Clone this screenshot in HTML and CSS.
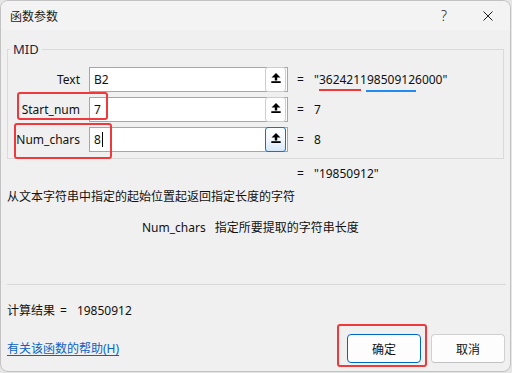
FILE: index.html
```html
<!DOCTYPE html>
<html lang="zh-CN">
<head>
<meta charset="utf-8">
<title>函数参数</title>
<link rel="stylesheet" href="styles.css">
</head>
<body>
<div class="window">
  <div class="titlebar">
    <span class="title">函数参数</span>
    <span class="tb-btn help-btn">?</span>
    <span class="tb-btn close-btn">
      <svg width="10" height="10" viewBox="0 0 10 10"><path d="M0.5 0.5 L9.5 9.5 M9.5 0.5 L0.5 9.5" stroke="#1f1f1f" stroke-width="1" fill="none"/></svg>
    </span>
  </div>
  <div class="content">
    <fieldset class="group">
      <legend class="group-title">MID</legend>
      <div class="args">
        <span class="arg-label">Text</span>
        <div class="ref-input">
          <span class="ref-text">B2</span>
          <span class="ref-btn"><svg width="10" height="10" viewBox="0 0 10 10"><path d="M5 0 L9.5 4.6 L6.2 4.6 L6.2 7.4 L3.8 7.4 L3.8 4.6 L0.5 4.6 Z" fill="#000"/><rect x="0.3" y="8.2" width="9.4" height="1.8" fill="#000"/></svg></span>
        </div>
        <span class="eq">=</span>
        <span class="val">"<span class="mark mark-red">362421</span><span class="mark mark-blue">19850912</span>6000"</span>

        <span class="arg-label">Start_num</span>
        <div class="ref-input">
          <span class="ref-text">7</span>
          <span class="ref-btn"><svg width="10" height="10" viewBox="0 0 10 10"><path d="M5 0 L9.5 4.6 L6.2 4.6 L6.2 7.4 L3.8 7.4 L3.8 4.6 L0.5 4.6 Z" fill="#000"/><rect x="0.3" y="8.2" width="9.4" height="1.8" fill="#000"/></svg></span>
        </div>
        <span class="eq">=</span>
        <span class="val">7</span>

        <span class="arg-label">Num_chars</span>
        <div class="ref-input">
          <span class="ref-text">8<span class="caret"></span></span>
          <span class="ref-btn ref-btn-focus"><svg width="10" height="10" viewBox="0 0 10 10"><path d="M5 0 L9.5 4.6 L6.2 4.6 L6.2 7.4 L3.8 7.4 L3.8 4.6 L0.5 4.6 Z" fill="#000"/><rect x="0.3" y="8.2" width="9.4" height="1.8" fill="#000"/></svg></span>
        </div>
        <span class="eq">=</span>
        <span class="val">8</span>
      </div>
    </fieldset>

    <div class="result-row"><span class="eq">=</span><span class="val">"19850912"</span></div>
    <p class="desc">从文本字符串中指定的起始位置起返回指定长度的字符</p>
    <div class="param-desc"><span class="param-name">Num_chars</span><span>指定所要提取的字符串长度</span></div>
    <div class="sep"></div>
    <div class="calc"><span>计算结果</span><span class="calc-eq">=</span><span class="calc-val">19850912</span></div>
    <div class="footer">
      <a class="help-link" href="#">有关该函数的帮助(H)</a>
      <div class="buttons">
        <button class="btn btn-primary">确定</button>
        <button class="btn">取消</button>
      </div>
    </div>
  </div>

  <div class="annot annot-start"></div>
  <div class="annot annot-num"></div>
  <div class="annot annot-ok"></div>
</div>
</body>
</html>
```
FILE: styles.css
```css
* { box-sizing: border-box; }
html, body { margin: 0; padding: 0; }
body {
  background: #e6e6e6;
  font-family: "Noto Sans", "Noto Sans CJK SC", sans-serif;
  font-size: 12px;
  color: #111;
  width: 512px;
  height: 373px;
  overflow: hidden;
}
.window {
  position: relative;
  width: 511px;
  height: 372px;
  border: 1px solid #c2c2c2;
  border-radius: 8px;
  background: #f0f0f0;
  overflow: hidden;
  display: flex;
  flex-direction: column;
}
.titlebar {
  height: 29px;
  flex: none;
  background: #f3f3f3;
  display: flex;
  align-items: center;
  padding-left: 9px;
}
.title {
  flex: 1;
  font-family: "Noto Sans CJK SC", sans-serif;
  font-size: 12px;
  line-height: 16px;
  color: #1a1a1a;
}
.tb-btn {
  width: 44px;
  height: 29px;
  display: flex;
  align-items: center;
  justify-content: center;
}
.help-btn {
  font-size: 14px;
  font-weight: 300;
  color: #222;
}
.content {
  flex: 1;
  padding: 0 6px;
  display: flex;
  flex-direction: column;
}
.group {
  margin: 11px 0 0 0;
  padding: 10px 0 6px 0;
  border: 1px solid #dadada;
  min-width: 0;
}
.group-title {
  margin-left: 2px;
  padding: 0 3px;
  font-size: 13px;
  line-height: 16px;
  color: #1b2740;
}
.args {
  display: grid;
  grid-template-columns: 73px 216px 17px 1fr;
  grid-auto-rows: 25px;
  row-gap: 5px;
  align-items: center;
}
.arg-label {
  text-align: right;
  padding-right: 1px;
  line-height: 16px;
}
.ref-input {
  margin-left: 8px;
  width: 199px;
  height: 25px;
  border: 1px solid #a6a6a6;
  background: #fff;
  display: flex;
  align-items: center;
}
.ref-text {
  flex: 1;
  padding-left: 4px;
  line-height: 16px;
  display: flex;
  align-items: center;
}
.caret {
  display: inline-block;
  width: 0;
  height: 15px;
  border-left: 1px solid #000;
  margin-left: 1px;
}
.ref-btn {
  width: 21px;
  height: 25px;
  margin: -1px 1px -1px 0;
  border: 1px solid #cdcdcd;
  border-radius: 3px;
  background: #fff;
  display: flex;
  justify-content: center;
  padding-top: 5px;
}
.ref-btn-focus {
  border-color: #1a6fc9;
  background: linear-gradient(#fbfdff 0%, #f4f9fe 45%, #d7e8f8 100%);
}
.eq, .val { line-height: 16px; }
.mark { position: relative; }
.mark::after {
  content: "";
  position: absolute;
  height: 2px;
  bottom: -3px;
}
.mark-red::after { left: 0; right: -1px; background: #f0393b; }
.mark-blue::after { left: 6px; right: -1px; bottom: -4px; background: #1e8cf0; }

.result-row {
  margin-top: 7px;
  padding-left: 290px;
  display: flex;
  line-height: 16px;
}
.result-row .eq { width: 17px; }
.desc {
  margin: 6px 0 0 0;
  font-family: "Noto Sans CJK SC", sans-serif;
  line-height: 16px;
}
.param-desc {
  margin-top: 16px;
  padding-left: 135px;
  display: flex;
  gap: 9px;
  line-height: 16px;
  font-family: "Noto Sans", "Noto Sans CJK SC", sans-serif;
}
.sep {
  margin-top: 48px;
  margin-right: -2px;
  height: 1px;
  background: #d8d8d8;
}
.calc {
  margin-top: 18px;
  line-height: 16px;
  display: flex;
}
.calc-eq { margin-left: 5px; }
.calc-val { margin-left: 10px; }
.footer {
  margin-top: 15px;
  display: flex;
  align-items: center;
  justify-content: space-between;
}
.help-link {
  color: #0a62c4;
  text-decoration: underline;
  text-underline-offset: 2px;
  line-height: 16px;
}
.buttons {
  display: flex;
  gap: 10px;
  margin-right: -1px;
}
.btn {
  width: 74px;
  height: 29px;
  border: 1px solid #d0d0d0;
  border-bottom-color: #c2c2c2;
  border-radius: 4px;
  background: #fdfdfd;
  font-family: "Noto Sans CJK SC", sans-serif;
  font-size: 12px;
  color: #111;
  padding: 0;
}
.btn-primary {
  border: 1px solid #0067c0;
  background: #fdfdfd;
}
.annot {
  position: absolute;
  border: 2px solid #ee3a3c;
  border-radius: 3px;
}
.annot-start { left: 16px; top: 91px; width: 91px; height: 28px; }
.annot-num { left: 13px; top: 122px; width: 98px; height: 36px; }
.annot-ok { left: 336px; top: 323px; width: 90px; height: 43px; }
```
